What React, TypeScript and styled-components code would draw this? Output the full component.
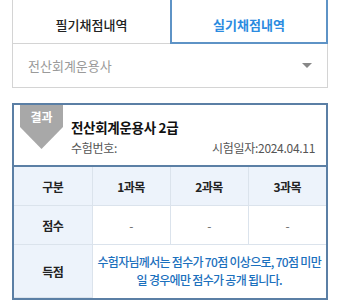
import styled, { createGlobalStyle } from "styled-components"

const GlobalStyle = createGlobalStyle`
  body {
    margin: 0;
    background: #fff;
    font-family: "Noto Sans CJK KR", "Noto Sans", sans-serif;
  }
`

const App = () => {
  return (
    <Page>
      <GlobalStyle />
      <Tabs>
        <Tab>필기채점내역</Tab>
        <Tab $active>실기채점내역</Tab>
      </Tabs>
      <Select>
        <span>전산회계운용사</span>
        <Caret />
      </Select>

      <Card>
        <Header>
          <Badge>결과</Badge>
          <HeaderBody>
            <Title>전산회계운용사 2급</Title>
            <Meta>
              <span>수험번호:</span>
              <span>시험일자:2024.04.11</span>
            </Meta>
          </HeaderBody>
        </Header>
        <Table>
          <tbody>
            <tr>
              <Th>구분</Th>
              <Th>1과목</Th>
              <Th>2과목</Th>
              <Th>3과목</Th>
            </tr>
            <tr>
              <Th>점수</Th>
              <Td>-</Td>
              <Td>-</Td>
              <Td>-</Td>
            </tr>
            <tr>
              <Th $tall>득점</Th>
              <Notice colSpan={3}>
                수험자님께서는 점수가 70점 이상으로, 70점 미만
                <br />일 경우에만 점수가 공개 됩니다.
              </Notice>
            </tr>
          </tbody>
        </Table>
      </Card>
    </Page>
  )
}

export default App

const Page = styled.div`
  padding: 0 12px;
`

const Tabs = styled.div`
  display: grid;
  grid-template-columns: 158px 1fr;
  height: 44px;
`

const Tab = styled.div<{ $active?: boolean }>`
  display: flex;
  align-items: center;
  justify-content: center;
  padding-top: 6px;
  box-sizing: border-box;
  font-size: 13px;
  font-weight: ${p => (p.$active ? 700 : 500)};
  color: ${p => (p.$active ? "#2b8be0" : "#222")};
  border: 1px solid ${p => (p.$active ? "#5e93c6" : "#d4d4d4")};
  border-top: none;
  ${p => (p.$active ? "border-width: 0 2px 2px 2px;" : "border-right: none;")}
`

const Select = styled.div`
  display: flex;
  align-items: center;
  justify-content: space-between;
  height: 44px;
  box-sizing: border-box;
  padding: 0 15px 0 15px;
  border: 1px solid #d4d4d4;
  border-top: none;
  font-size: 13px;
  color: #9a9a9a;
`

const Caret = styled.span`
  width: 0;
  height: 0;
  border-left: 5px solid transparent;
  border-right: 5px solid transparent;
  border-top: 5px solid #888;
`

const Card = styled.div`
  margin-top: 15px;
  border: 2px solid #5b7fa5;
  box-sizing: border-box;
`

const Header = styled.div`
  display: flex;
  gap: 8px;
  height: 60px;
  padding-left: 6px;
  border-bottom: 2px solid #5b7fa5;
`

const Badge = styled.div`
  width: 43px;
  height: 44px;
  background: #a8a8a8;
  color: #fff;
  font-size: 12px;
  font-weight: 700;
  text-align: center;
  padding-top: 3px;
  box-sizing: border-box;
  clip-path: polygon(0 0, 100% 0, 100% 50%, 50% 100%, 0 50%);
`

const HeaderBody = styled.div`
  flex: 1;
  padding: 12px 11px 0 0;
`

const Title = styled.div`
  font-size: 13.5px;
  font-weight: 700;
  color: #111;
  line-height: 20px;
  letter-spacing: -0.3px;
`

const Meta = styled.div`
  display: flex;
  justify-content: space-between;
  margin-top: 2px;
  font-size: 12px;
  color: #555;
  line-height: 18px;
  letter-spacing: -0.3px;
`

const Table = styled.table`
  width: 100%;
  border-collapse: collapse;
  table-layout: fixed;
  font-size: 12px;
  letter-spacing: -0.5px;
`

const Th = styled.th<{ $tall?: boolean }>`
  background: #edf3fb;
  color: #222;
  font-weight: 700;
  height: ${p => (p.$tall ? "50px" : "36px")};
  border: 1px solid #dbe3ec;
  border-top: none;
  &:first-child { border-left: none; }
  &:last-child { border-right: none; }
`

const Td = styled.td`
  text-align: center;
  color: #666;
  border: 1px solid #dbe3ec;
  &:last-child { border-right: none; }
`

const Notice = styled.td`
  text-align: center;
  color: #1b70bd;
  font-weight: 500;
  line-height: 18px;
  padding: 0;
  white-space: nowrap;
  letter-spacing: -0.7px;
  border-left: 1px solid #dbe3ec;
`
